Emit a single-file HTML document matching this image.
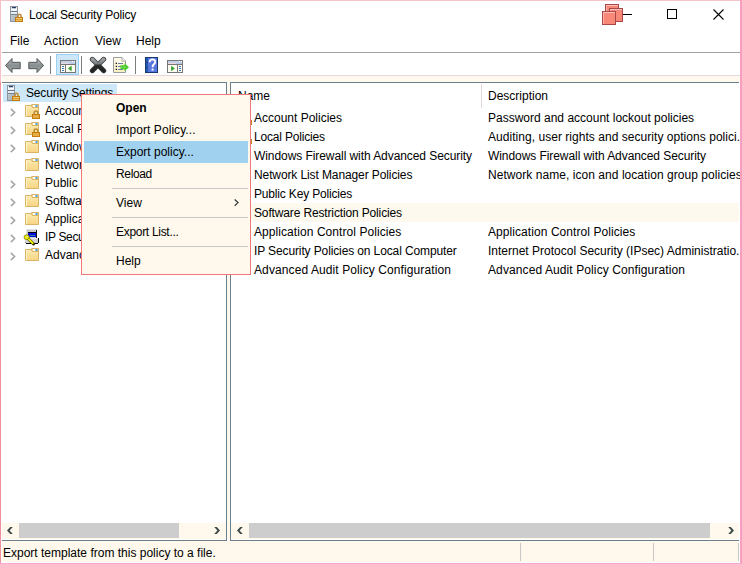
<!DOCTYPE html>
<html><head><meta charset="utf-8">
<style>
*{margin:0;padding:0;box-sizing:border-box}
html,body{width:742px;height:564px;overflow:hidden;background:#fff}
body{position:relative;font-family:"Liberation Sans",sans-serif;font-size:12px;color:#000}
.a{position:absolute}
.t{position:absolute;white-space:nowrap;line-height:16px;height:16px}
.cream{background:#fef9ec}
.slate{background:#6a808c}
.clip{position:absolute;overflow:hidden}
svg{display:block}
</style></head><body>


<!-- title -->
<svg class="a" style="left:9px;top:6px" width="16" height="16" viewBox="0 0 16 16">
    <defs><linearGradient id="sg" x1="0" y1="0" x2="1" y2="1"><stop offset="0" stop-color="#d8dce0"/><stop offset="1" stop-color="#98a8b8"/></linearGradient></defs>
    <rect x="1.5" y="0.5" width="7" height="15" fill="url(#sg)" stroke="#8c949c"/>
    <rect x="2" y="1" width="6" height="7" fill="#e4e8ec"/>
    <rect x="3" y="1" width="4" height="1.5" fill="#2c3c6c"/>
    <rect x="2" y="2.5" width="6" height="2" fill="#f8fbff"/>
    <rect x="2" y="5" width="6" height="1" fill="#707880"/>
    <rect x="2" y="6" width="6" height="1.5" fill="#e4f2ff"/>
    <rect x="2" y="8" width="6" height="1" fill="#7a828a"/>
    <path d="M9 11.5 V9.8 a1.5 1.5 0 0 1 3 0 V11.5" fill="none" stroke="#c08c38" stroke-width="1.5"/>
    <rect x="6.5" y="11.5" width="7" height="4" fill="#d89a28" stroke="#c27c10"/>
    <rect x="7" y="12" width="6" height="1" fill="#f2c870"/>
    <rect x="7" y="14" width="6" height="1" fill="#eebe60"/>
  </svg>
<div class="t" style="left:29px;top:7px;letter-spacing:-0.17px">Local Security Policy</div>

<!-- caption icons -->
<div class="a" style="left:618px;top:14px;width:14px;height:1px;background:#000"></div>
<svg class="a" style="left:601px;top:3px" width="24" height="23" viewBox="0 0 24 23">
  <rect x="4.5" y="1.5" width="13" height="13" fill="#f88878" stroke="#a84848"/>
  <rect x="5" y="2" width="12" height="1" fill="#ffc0b8"/><rect x="5" y="2" width="1" height="12" fill="#ffb0a8"/>
  <rect x="8.5" y="5.5" width="13" height="13" fill="#f88878" stroke="#a84848"/>
  <rect x="9" y="6" width="12" height="1" fill="#ffc0b8"/><rect x="9" y="6" width="1" height="12" fill="#ffb0a8"/>
  <rect x="1.5" y="8.5" width="13" height="13" fill="#f88878" stroke="#a84848"/>
  <rect x="2" y="9" width="12" height="1" fill="#ffc0b8"/><rect x="2" y="9" width="1" height="12" fill="#ffb0a8"/>
</svg>
<div class="a" style="left:667px;top:9px;width:10px;height:10px;border:1px solid #000"></div>
<svg class="a" style="left:713px;top:9px" width="11" height="11" viewBox="0 0 11 11">
  <path d="M0.5 0.5 L10.5 10.5 M10.5 0.5 L0.5 10.5" stroke="#000" stroke-width="1.1"/>
</svg>

<!-- menu bar -->
<div class="t" style="left:10px;top:33px">File</div>
<div class="t" style="left:44px;top:33px;letter-spacing:0.2px">Action</div>
<div class="t" style="left:95px;top:33px">View</div>
<div class="t" style="left:136px;top:33px">Help</div>
<div class="a" style="left:2px;top:52px;width:738px;height:1px;background:#a0a0a0"></div>

<!-- toolbar -->
<svg class="a" style="left:4px;top:57px" width="42" height="17" viewBox="0 0 42 17">
  <defs><linearGradient id="ag" x1="0" y1="0" x2="0" y2="1"><stop offset="0" stop-color="#b4b8ba"/><stop offset="0.5" stop-color="#8a9092"/><stop offset="1" stop-color="#9ca2a4"/></linearGradient></defs>
  <path d="M1.5 8.5 L8 1.5 V5.3 H16.2 V11.7 H8 V15.5 Z" fill="url(#ag)" stroke="#505858" stroke-linejoin="round"/>
  <path d="M39.5 8.5 L33 1.5 V5.3 H24.8 V11.7 H33 V15.5 Z" fill="url(#ag)" stroke="#505858" stroke-linejoin="round"/>
</svg>
<div class="a" style="left:50px;top:56px;width:1px;height:18px;background:#7c7c7c"></div>
<div class="a" style="left:56px;top:54px;width:23px;height:21px;background:#cce8f8;border:1px solid #9ad0f4"></div>
<svg class="a" style="left:60px;top:60px" width="16" height="13" viewBox="0 0 16 13" shape-rendering="crispEdges">
  <rect x="0" y="0" width="16" height="13" fill="#767676"/>
  <rect x="1" y="1" width="14" height="2" fill="#c4cfe8"/>
  <rect x="12" y="1" width="1" height="1" fill="#fff"/><rect x="14" y="1" width="1" height="1" fill="#fff"/>
  <rect x="1" y="3" width="8" height="1" fill="#f0d8e0"/><rect x="9" y="3" width="6" height="1" fill="#b8cce8"/>
  <rect x="1" y="5" width="4" height="7" fill="#fffaf0"/>
  <rect x="6" y="5" width="9" height="7" fill="#fffcf2"/>
  <rect x="2" y="6" width="2" height="1" fill="#3a78b8"/><rect x="2" y="8" width="2" height="1" fill="#3a78b8"/><rect x="2" y="10" width="2" height="1" fill="#3a78b8"/>
</svg>
<svg class="a" style="left:60px;top:60px" width="16" height="13" viewBox="0 0 16 13"><path d="M8 8.5 L11.6 5.8 V11.2 Z" fill="#2ca024"/></svg>
<div class="a" style="left:81px;top:56px;width:1px;height:18px;background:#7c7c7c"></div>
<svg class="a" style="left:89px;top:56px" width="18" height="18" viewBox="0 0 18 18">
  <defs><linearGradient id="xg" x1="0" y1="0" x2="0" y2="1"><stop offset="0" stop-color="#9a9ea0"/><stop offset="0.42" stop-color="#74787a"/><stop offset="0.5" stop-color="#2a2a2a"/><stop offset="1" stop-color="#222"/></linearGradient></defs>
  <path d="M3.3 3.3 L14.7 14.7 M14.7 3.3 L3.3 14.7" stroke="#3a3e40" stroke-width="5" stroke-linecap="round"/>
  <path d="M3.3 3.3 L14.7 14.7 M14.7 3.3 L3.3 14.7" stroke="url(#xg)" stroke-width="3.4" stroke-linecap="round"/>
</svg>
<svg class="a" style="left:112px;top:57px" width="19" height="16" viewBox="0 0 19 16">
  <defs><linearGradient id="dg" x1="0" y1="0" x2="0" y2="1"><stop offset="0" stop-color="#fffcf0"/><stop offset="1" stop-color="#f8f0c0"/></linearGradient></defs>
  <path d="M1.5 0.5 H10 L13.5 4 V15.5 H1.5 Z" fill="url(#dg)" stroke="#9a9a9a"/>
  <path d="M10 0.5 V4 H13.5" fill="#fff" stroke="#a8a8a8"/>
  <rect x="3.7" y="5.7" width="1.3" height="1.3" fill="#181818"/><rect x="3.7" y="8.7" width="1.3" height="1.3" fill="#181818"/><rect x="3.7" y="11.7" width="1.3" height="1.3" fill="#181818"/>
  <rect x="6" y="6" width="5" height="1" fill="#6878a8"/><rect x="6" y="9" width="5" height="1" fill="#6878a8"/><rect x="6" y="12" width="5" height="1" fill="#6878a8"/>
  <path d="M8.5 8.2 H12.5 V6.2 L17 10.2 L12.5 14.2 V12.2 H8.5 Z" fill="#48cc28"/>
  <path d="M9.5 10.2 H14" stroke="#a8f090" stroke-width="1" stroke-dasharray="1 1"/>
</svg>
<div class="a" style="left:135px;top:56px;width:1px;height:18px;background:#7c7c7c"></div>
<svg class="a" style="left:145px;top:57px" width="13" height="16" viewBox="0 0 13 16">
  <rect x="0" y="0" width="13" height="16" fill="#183870"/>
  <rect x="1" y="1" width="2" height="14" fill="#1e5cb0"/>
  <rect x="3" y="1" width="9" height="14" fill="#5878e0"/>
  <rect x="1" y="5" width="2" height="1" fill="#403880"/><rect x="1" y="10" width="2" height="1" fill="#403880"/>
  <path d="M4.6 5.2 Q4.8 2.4 7.6 2.4 Q10.3 2.5 10.2 5 Q10.1 6.6 8.6 7.6 Q7.6 8.3 7.6 10.2" fill="none" stroke="#fff" stroke-width="1.9"/>
  <rect x="6.6" y="11.6" width="2" height="2" fill="#fff"/>
</svg>
<svg class="a" style="left:167px;top:60px" width="16" height="13" viewBox="0 0 16 13" shape-rendering="crispEdges">
  <rect x="0" y="0" width="16" height="13" fill="#767676"/>
  <rect x="1" y="1" width="14" height="2" fill="#c4cfe8"/>
  <rect x="12" y="1" width="1" height="1" fill="#fff"/><rect x="14" y="1" width="1" height="1" fill="#fff"/>
  <rect x="1" y="3" width="8" height="1" fill="#f0d8e0"/><rect x="9" y="3" width="6" height="1" fill="#b8cce8"/>
  <rect x="1" y="5" width="9" height="7" fill="#fffcf2"/>
  <rect x="11" y="5" width="4" height="7" fill="#fffaf0"/>
  <rect x="12" y="6" width="2" height="1" fill="#3a78b8"/><rect x="12" y="8" width="2" height="1" fill="#3a78b8"/><rect x="12" y="10" width="2" height="1" fill="#3a78b8"/>
</svg>
<svg class="a" style="left:167px;top:60px" width="16" height="13" viewBox="0 0 16 13"><path d="M4.2 5.8 L7.8 8.5 L4.2 11.2 Z" fill="#2ca024"/></svg>
<div class="a" style="left:2px;top:75px;width:738px;height:1px;background:#e6d6de"></div>
<div class="a cream" style="left:2px;top:76px;width:738px;height:6px"></div>

<!-- panes gap -->
<div class="a cream" style="left:227px;top:82px;width:3px;height:459px"></div>

<!-- left pane -->
<div class="a slate" style="left:2px;top:82px;width:225px;height:1px"></div>
<div class="a slate" style="left:226px;top:82px;width:1px;height:459px"></div>
<div class="a slate" style="left:2px;top:540px;width:225px;height:1px"></div>
<div class="clip" style="left:2px;top:83px;width:224px;height:457px">
  <div class="a" style="left:1px;top:1px;width:114px;height:18px;background:#cde8f8"></div>
  <svg class="a" style="left:4px;top:2px" width="16" height="16" viewBox="0 0 16 16">
    
    <rect x="1.5" y="0.5" width="7" height="15" fill="url(#sg)" stroke="#8c949c"/>
    <rect x="2" y="1" width="6" height="7" fill="#e4e8ec"/>
    <rect x="3" y="1" width="4" height="1.5" fill="#2c3c6c"/>
    <rect x="2" y="2.5" width="6" height="2" fill="#f8fbff"/>
    <rect x="2" y="5" width="6" height="1" fill="#707880"/>
    <rect x="2" y="6" width="6" height="1.5" fill="#e4f2ff"/>
    <rect x="2" y="8" width="6" height="1" fill="#7a828a"/>
    <path d="M9 11.5 V9.8 a1.5 1.5 0 0 1 3 0 V11.5" fill="none" stroke="#c08c38" stroke-width="1.5"/>
    <rect x="6.5" y="11.5" width="7" height="4" fill="#d89a28" stroke="#c27c10"/>
    <rect x="7" y="12" width="6" height="1" fill="#f2c870"/>
    <rect x="7" y="14" width="6" height="1" fill="#eebe60"/>
  </svg>
  <div class="t" style="left:24px;top:2px;letter-spacing:-0.17px">Security Settings</div>
  <!-- rows -->
  <svg class="a" style="left:8px;top:25px" width="6" height="10" viewBox="0 0 6 10">
    <path d="M0.9 0.9 L4.6 4.5 L0.9 8.1" fill="none" stroke="#a6a6a6" stroke-width="1.6"/>
  </svg>
  <svg class="a" style="left:22px;top:20px" width="16" height="16" viewBox="0 0 16 16">
    <defs><linearGradient id="fg" x1="0" y1="0" x2="0" y2="1"><stop offset="0" stop-color="#fdeeb8"/><stop offset="0.5" stop-color="#f9df98"/><stop offset="1" stop-color="#f6d486"/></linearGradient></defs>
    <path d="M1.5 2.5 H7 L8 4 H14.5 V13.5 H1.5 Z" fill="url(#fg)" stroke="#d8b464"/>
    <rect x="2" y="3" width="1" height="10" fill="#fff6cc"/>
    <path d="M7.5 1.5 H14.5 V4.5 H8.5 Z" fill="#fae6b0" stroke="#d8b464"/>
    <rect x="9" y="2" width="2.5" height="2" fill="#ffffff"/>
    <rect x="11.5" y="2" width="2" height="2" fill="#50a0e8"/>
  </svg>
  <svg class="a" style="left:30px;top:27px" width="9" height="10" viewBox="0 0 9 10">
    <path d="M2.2 4.6 V2.9 a1.8 1.8 0 0 1 3.6 0 V4.6" fill="none" stroke="#b88c38" stroke-width="1.5"/>
    <rect x="0.5" y="4.5" width="7" height="4" fill="#d89424" stroke="#c47a0c"/>
    <rect x="1" y="5.5" width="6" height="1" fill="#f2c468"/>
    <rect x="1" y="7.2" width="6" height="0.8" fill="#ecb850"/>
  </svg>
  <div class="t" style="left:43px;top:20px">Account Policies</div>

  <svg class="a" style="left:8px;top:43px" width="6" height="10" viewBox="0 0 6 10">
    <path d="M0.9 0.9 L4.6 4.5 L0.9 8.1" fill="none" stroke="#a6a6a6" stroke-width="1.6"/>
  </svg>
  <svg class="a" style="left:22px;top:38px" width="16" height="16" viewBox="0 0 16 16">
    
    <path d="M1.5 2.5 H7 L8 4 H14.5 V13.5 H1.5 Z" fill="url(#fg)" stroke="#d8b464"/>
    <rect x="2" y="3" width="1" height="10" fill="#fff6cc"/>
    <path d="M7.5 1.5 H14.5 V4.5 H8.5 Z" fill="#fae6b0" stroke="#d8b464"/>
    <rect x="9" y="2" width="2.5" height="2" fill="#ffffff"/>
    <rect x="11.5" y="2" width="2" height="2" fill="#50a0e8"/>
  </svg>
  <svg class="a" style="left:30px;top:45px" width="9" height="10" viewBox="0 0 9 10">
    <path d="M2.2 4.6 V2.9 a1.8 1.8 0 0 1 3.6 0 V4.6" fill="none" stroke="#b88c38" stroke-width="1.5"/>
    <rect x="0.5" y="4.5" width="7" height="4" fill="#d89424" stroke="#c47a0c"/>
    <rect x="1" y="5.5" width="6" height="1" fill="#f2c468"/>
    <rect x="1" y="7.2" width="6" height="0.8" fill="#ecb850"/>
  </svg>
  <div class="t" style="left:43px;top:38px">Local Policies</div>

  <svg class="a" style="left:8px;top:61px" width="6" height="10" viewBox="0 0 6 10">
    <path d="M0.9 0.9 L4.6 4.5 L0.9 8.1" fill="none" stroke="#a6a6a6" stroke-width="1.6"/>
  </svg>
  <svg class="a" style="left:22px;top:56px" width="16" height="16" viewBox="0 0 16 16">
    
    <path d="M1.5 2.5 H7 L8 4 H14.5 V13.5 H1.5 Z" fill="url(#fg)" stroke="#d8b464"/>
    <rect x="2" y="3" width="1" height="10" fill="#fff6cc"/>
    <path d="M7.5 1.5 H14.5 V4.5 H8.5 Z" fill="#fae6b0" stroke="#d8b464"/>
    <rect x="9" y="2" width="2.5" height="2" fill="#ffffff"/>
    <rect x="11.5" y="2" width="2" height="2" fill="#50a0e8"/>
  </svg>
  <div class="t" style="left:43px;top:56px">Windows Firewall with Advanced Security</div>

  <svg class="a" style="left:22px;top:74px" width="16" height="16" viewBox="0 0 16 16">
    
    <path d="M1.5 2.5 H7 L8 4 H14.5 V13.5 H1.5 Z" fill="url(#fg)" stroke="#d8b464"/>
    <rect x="2" y="3" width="1" height="10" fill="#fff6cc"/>
    <path d="M7.5 1.5 H14.5 V4.5 H8.5 Z" fill="#fae6b0" stroke="#d8b464"/>
    <rect x="9" y="2" width="2.5" height="2" fill="#ffffff"/>
    <rect x="11.5" y="2" width="2" height="2" fill="#50a0e8"/>
  </svg>
  <div class="t" style="left:43px;top:74px">Network List Manager Policies</div>

  <svg class="a" style="left:8px;top:97px" width="6" height="10" viewBox="0 0 6 10">
    <path d="M0.9 0.9 L4.6 4.5 L0.9 8.1" fill="none" stroke="#a6a6a6" stroke-width="1.6"/>
  </svg>
  <svg class="a" style="left:22px;top:92px" width="16" height="16" viewBox="0 0 16 16">
    
    <path d="M1.5 2.5 H7 L8 4 H14.5 V13.5 H1.5 Z" fill="url(#fg)" stroke="#d8b464"/>
    <rect x="2" y="3" width="1" height="10" fill="#fff6cc"/>
    <path d="M7.5 1.5 H14.5 V4.5 H8.5 Z" fill="#fae6b0" stroke="#d8b464"/>
    <rect x="9" y="2" width="2.5" height="2" fill="#ffffff"/>
    <rect x="11.5" y="2" width="2" height="2" fill="#50a0e8"/>
  </svg>
  <div class="t" style="left:43px;top:92px">Public Key Policies</div>

  <svg class="a" style="left:8px;top:115px" width="6" height="10" viewBox="0 0 6 10">
    <path d="M0.9 0.9 L4.6 4.5 L0.9 8.1" fill="none" stroke="#a6a6a6" stroke-width="1.6"/>
  </svg>
  <svg class="a" style="left:22px;top:110px" width="16" height="16" viewBox="0 0 16 16">
    
    <path d="M1.5 2.5 H7 L8 4 H14.5 V13.5 H1.5 Z" fill="url(#fg)" stroke="#d8b464"/>
    <rect x="2" y="3" width="1" height="10" fill="#fff6cc"/>
    <path d="M7.5 1.5 H14.5 V4.5 H8.5 Z" fill="#fae6b0" stroke="#d8b464"/>
    <rect x="9" y="2" width="2.5" height="2" fill="#ffffff"/>
    <rect x="11.5" y="2" width="2" height="2" fill="#50a0e8"/>
  </svg>
  <div class="t" style="left:43px;top:110px">Software Restriction Policies</div>

  <svg class="a" style="left:8px;top:133px" width="6" height="10" viewBox="0 0 6 10">
    <path d="M0.9 0.9 L4.6 4.5 L0.9 8.1" fill="none" stroke="#a6a6a6" stroke-width="1.6"/>
  </svg>
  <svg class="a" style="left:22px;top:128px" width="16" height="16" viewBox="0 0 16 16">
    
    <path d="M1.5 2.5 H7 L8 4 H14.5 V13.5 H1.5 Z" fill="url(#fg)" stroke="#d8b464"/>
    <rect x="2" y="3" width="1" height="10" fill="#fff6cc"/>
    <path d="M7.5 1.5 H14.5 V4.5 H8.5 Z" fill="#fae6b0" stroke="#d8b464"/>
    <rect x="9" y="2" width="2.5" height="2" fill="#ffffff"/>
    <rect x="11.5" y="2" width="2" height="2" fill="#50a0e8"/>
  </svg>
  <div class="t" style="left:43px;top:128px">Application Control Policies</div>

  <svg class="a" style="left:8px;top:151px" width="6" height="10" viewBox="0 0 6 10">
    <path d="M0.9 0.9 L4.6 4.5 L0.9 8.1" fill="none" stroke="#a6a6a6" stroke-width="1.6"/>
  </svg>
  <svg class="a" style="left:19px;top:145px" width="19" height="18" viewBox="0 0 19 18" shape-rendering="crispEdges">
    <rect x="5" y="1" width="11" height="10" fill="#c8c8c8"/>
    <rect x="5" y="1" width="11" height="1" fill="#e0e0e0"/>
    <rect x="5" y="1" width="1" height="10" fill="#e4e4e4"/>
    <rect x="15" y="2" width="1" height="9" fill="#101010"/>
    <rect x="7" y="4" width="8" height="1" fill="#000"/>
    <rect x="7" y="5" width="8" height="4" fill="#0a0ae0"/>
    <rect x="9" y="7" width="5" height="1" fill="#108890"/>
    <rect x="4" y="10" width="13" height="5" fill="#d4d4d4"/>
    <rect x="4" y="10" width="13" height="1" fill="#ececec"/>
    <rect x="17" y="10" width="1" height="5" fill="#000"/>
    <rect x="5" y="15" width="12" height="1" fill="#000"/>
    <rect x="4" y="14" width="1" height="1" fill="#909090"/>
  </svg>
  <svg class="a" style="left:19px;top:145px" width="19" height="18" viewBox="0 0 19 18">
    <path d="M7 10.5 L12.5 16" stroke="#303000" stroke-width="3" stroke-linecap="round"/>
    <path d="M6.8 10.2 L12.2 15.6" stroke="#f4f400" stroke-width="2"/>
    <ellipse cx="5.6" cy="9.2" rx="2.6" ry="2.4" fill="#f0f000" stroke="#707000" stroke-width="0.7"/>
    <rect x="5.5" y="8" width="1.6" height="1.2" fill="#d8d8c0"/>
  </svg>
  <div class="t" style="left:43px;top:146px;letter-spacing:-0.35px">IP Security Policies on Local Computer</div>

  <svg class="a" style="left:8px;top:169px" width="6" height="10" viewBox="0 0 6 10">
    <path d="M0.9 0.9 L4.6 4.5 L0.9 8.1" fill="none" stroke="#a6a6a6" stroke-width="1.6"/>
  </svg>
  <svg class="a" style="left:22px;top:164px" width="16" height="16" viewBox="0 0 16 16">
    
    <path d="M1.5 2.5 H7 L8 4 H14.5 V13.5 H1.5 Z" fill="url(#fg)" stroke="#d8b464"/>
    <rect x="2" y="3" width="1" height="10" fill="#fff6cc"/>
    <path d="M7.5 1.5 H14.5 V4.5 H8.5 Z" fill="#fae6b0" stroke="#d8b464"/>
    <rect x="9" y="2" width="2.5" height="2" fill="#ffffff"/>
    <rect x="11.5" y="2" width="2" height="2" fill="#50a0e8"/>
  </svg>
  <div class="t" style="left:43px;top:164px">Advanced Audit Policy Configuration</div>

  <!-- scrollbar -->
  <div class="a cream" style="left:0;top:440px;width:224px;height:16px"></div>
  <div class="a" style="left:17px;top:440px;width:160px;height:15px;background:#cdcdcd"></div>
  <svg class="a" style="left:4px;top:443px" width="7" height="9" viewBox="0 0 7 9">
    <path d="M6.8 1 H4.2 L1 4.5 L4.2 8 H6.8 L3.6 4.5 Z" fill="#3c4a48"/>
  </svg>
  <svg class="a" style="left:212px;top:443px" width="7" height="9" viewBox="0 0 7 9">
    <path d="M0.2 1 H2.8 L6 4.5 L2.8 8 H0.2 L3.4 4.5 Z" fill="#3c4a48"/>
  </svg>
</div>

<!-- right pane -->
<div class="a slate" style="left:230px;top:82px;width:509px;height:1px"></div>
<div class="a slate" style="left:230px;top:82px;width:1px;height:459px"></div>
<div class="a slate" style="left:230px;top:540px;width:509px;height:1px"></div>
<div class="clip" style="left:231px;top:83px;width:509px;height:457px">
  <div class="a" style="left:250px;top:1px;width:1px;height:24px;background:#e4d4dc"></div>
  <div class="t" style="left:7px;top:5px">Name</div>
  <div class="t" style="left:257px;top:5px">Description</div>
  <div class="a" style="left:0;top:120px;width:508px;height:19px;background:#fdf9ee"></div>
  <div class="a" style="left:20px;top:37px;width:1px;height:5px;background:#c88020"></div>
  <div class="a" style="left:20px;top:56px;width:1px;height:5px;background:#c88020"></div>
  <div class="t" style="left:23px;top:27px">Account Policies</div>
  <div class="t" style="left:23px;top:46px;letter-spacing:-0.19px">Local Policies</div>
  <div class="t" style="left:23px;top:65px;letter-spacing:-0.07px">Windows Firewall with Advanced Security</div>
  <div class="t" style="left:23px;top:84px;letter-spacing:-0.107px">Network List Manager Policies</div>
  <div class="t" style="left:23px;top:103px;letter-spacing:-0.167px">Public Key Policies</div>
  <div class="t" style="left:23px;top:122px;letter-spacing:-0.143px">Software Restriction Policies</div>
  <div class="t" style="left:23px;top:141px;letter-spacing:0.07px">Application Control Policies</div>
  <div class="t" style="left:23px;top:160px;letter-spacing:-0.12px">IP Security Policies on Local Computer</div>
  <div class="t" style="left:23px;top:179px;letter-spacing:0.1px">Advanced Audit Policy Configuration</div>
  <div class="t" style="left:257px;top:27px">Password and account lockout policies</div>
  <div class="t" style="left:257px;top:46px;letter-spacing:0.04px">Auditing, user rights and security options polici...</div>
  <div class="t" style="left:257px;top:65px;letter-spacing:-0.07px">Windows Firewall with Advanced Security</div>
  <div class="t" style="left:257px;top:84px;letter-spacing:0.05px">Network name, icon and location group policies</div>
  <div class="t" style="left:257px;top:141px;letter-spacing:0.07px">Application Control Policies</div>
  <div class="t" style="left:257px;top:160px">Internet Protocol Security (IPsec) Administratio...</div>
  <div class="t" style="left:257px;top:179px;letter-spacing:0.1px">Advanced Audit Policy Configuration</div>
  <!-- scrollbar -->
  <div class="a cream" style="left:0;top:440px;width:508px;height:16px"></div>
  <div class="a" style="left:18px;top:440px;width:461px;height:15px;background:#cdcdcd"></div>
  <svg class="a" style="left:5px;top:443px" width="7" height="9" viewBox="0 0 7 9">
    <path d="M6.8 1 H4.2 L1 4.5 L4.2 8 H6.8 L3.6 4.5 Z" fill="#3c4a48"/>
  </svg>
  <svg class="a" style="left:497px;top:443px" width="7" height="9" viewBox="0 0 7 9">
    <path d="M0.2 1 H2.8 L6 4.5 L2.8 8 H0.2 L3.4 4.5 Z" fill="#3c4a48"/>
  </svg>
</div>

<!-- status bar -->
<div class="a cream" style="left:2px;top:541px;width:737px;height:21px"></div>
<div class="t" style="left:3px;top:545px">Export template from this policy to a file.</div>
<div class="a" style="left:520px;top:543px;width:1px;height:18px;background:#c8c8c8"></div>
<div class="a" style="left:653px;top:543px;width:1px;height:18px;background:#c8c8c8"></div>
<div class="a" style="left:738px;top:543px;width:1px;height:18px;background:#c8c8c8"></div>

<!-- context menu -->
<div class="a" style="left:81px;top:94px;width:170px;height:181px;background:#fef9ec;border:1px solid #f07878"></div>
<div class="a" style="left:84px;top:141px;width:164px;height:22px;background:#a0d2f0"></div>
<div class="t" style="left:116px;top:100px;font-weight:bold">Open</div>
<div class="t" style="left:116px;top:122px;letter-spacing:0.07px">Import Policy...</div>
<div class="t" style="left:116px;top:144px">Export policy...</div>
<div class="t" style="left:116px;top:166px;letter-spacing:-0.35px">Reload</div>
<div class="a" style="left:112px;top:188px;width:136px;height:1px;background:#c8c8c8"></div>
<div class="t" style="left:116px;top:195px">View</div>
<svg class="a" style="left:234px;top:199px" width="6" height="8" viewBox="0 0 6 8"><path d="M0.7 0.5 L4 3.6 L0.7 6.7" fill="none" stroke="#303838" stroke-width="1.2"/></svg>
<div class="a" style="left:112px;top:217px;width:136px;height:1px;background:#c8c8c8"></div>
<div class="t" style="left:116px;top:224px;letter-spacing:-0.3px">Export List...</div>
<div class="a" style="left:112px;top:246px;width:136px;height:1px;background:#c8c8c8"></div>
<div class="t" style="left:116px;top:253px">Help</div>
<!-- window borders -->
<div class="a" style="left:0;top:0;width:742px;height:1px;background:#f5c4c8"></div>
<div class="a" style="left:0;top:0;width:1px;height:82px;background:#f5c0c6"></div>
<div class="a" style="left:0;top:82px;width:1px;height:482px;background:#f0909c"></div>
<div class="a" style="left:740px;top:0;width:2px;height:564px;background:#f5a0c0"></div>
<div class="a" style="left:0;top:563px;width:742px;height:1px;background:#f8a8d0"></div>

</body></html>
